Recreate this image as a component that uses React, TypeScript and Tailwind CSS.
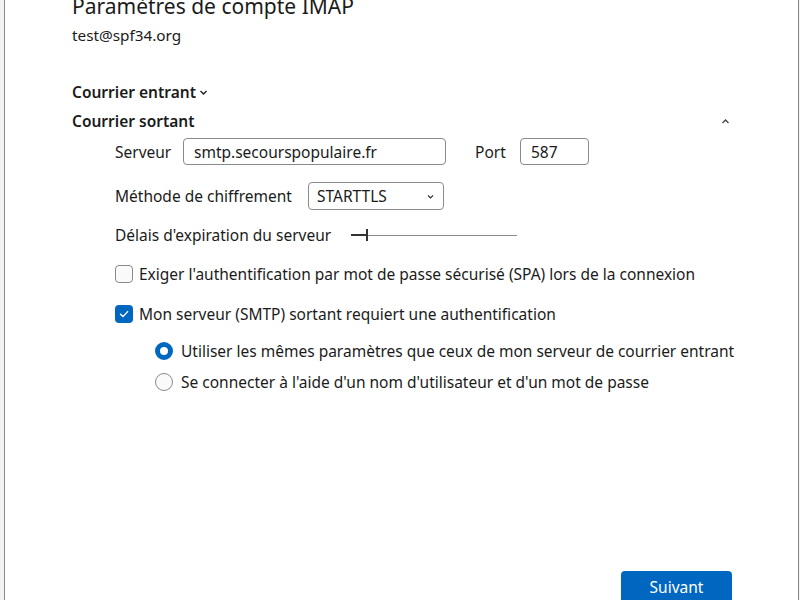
import React from "react";

const font = { fontFamily: '"Noto Sans", "Liberation Sans", sans-serif' };

function Checkbox({ checked }: { checked?: boolean }) {
  if (checked) {
    return (
      <span className="flex h-[18px] w-[18px] shrink-0 items-center justify-center rounded-[4px] bg-[#0067c0]">
        <svg width="12" height="12" viewBox="0 0 12 12" fill="none">
          <path d="M2.5 6.2 L5 8.6 L9.6 3.6" stroke="white" strokeWidth="1.4" strokeLinecap="round" strokeLinejoin="round" />
        </svg>
      </span>
    );
  }
  return <span className="h-[18px] w-[18px] shrink-0 rounded-[4px] border border-[#8a8a8a] bg-[#fafafa]" />;
}

function Radio({ checked }: { checked?: boolean }) {
  if (checked) {
    return <span className="h-[18px] w-[18px] shrink-0 rounded-full border-[5px] border-[#0067c0] bg-white" />;
  }
  return <span className="h-[18px] w-[18px] shrink-0 rounded-full border border-[#8a8a8a] bg-[#fafafa]" />;
}

export default function App() {
  return (
    <div className="flex h-[600px] w-[800px] overflow-hidden bg-[#f3f3f3] text-[#1b1b1b]" style={font}>
      <div className="w-[4px] shrink-0" />
      <div className="flex w-[795px] shrink-0 flex-col border-x border-[#8a8a8a] bg-white">
        <div className="flex flex-1 flex-col pl-[67px] pr-[66px]">
          <h1 className="-mt-[8px] whitespace-nowrap text-[21px] leading-[28px] text-[#1b1b1b]">Paramètres de compte IMAP</h1>
          <div className="mt-[5px] text-[15.3px] leading-[20px]">test@spf34.org</div>

          <div className="mt-[37px] flex items-center text-[15.5px] font-semibold leading-[20px]">
            Courrier entrant
            <svg className="ml-[3px]" width="9" height="9" viewBox="0 0 9 9" fill="none">
              <path d="M1.5 3 L4.5 6 L7.5 3" stroke="#1b1b1b" strokeWidth="1.3" />
            </svg>
          </div>
          <div className="mt-[9px] flex items-center justify-between text-[15.5px] font-semibold leading-[20px]">
            <span>Courrier sortant</span>
            <svg className="mr-[2px]" width="9" height="9" viewBox="0 0 9 9" fill="none">
              <path d="M1.5 6 L4.5 3 L7.5 6" stroke="#444" strokeWidth="1.3" />
            </svg>
          </div>

          <div className="ml-[43px] flex flex-col whitespace-nowrap text-[15.5px] leading-[20px]">
            <div className="mt-[7px] flex items-center">
              <span className="w-[68px]">Serveur</span>
              <div className="flex h-[27px] w-[263px] items-center rounded-[4px] border border-[#8a8a8a] px-[10px]">
                smtp.secourspopulaire.fr
              </div>
              <span className="ml-[29px] w-[45px]">Port</span>
              <div className="flex h-[27px] w-[69px] items-center rounded-[4px] border border-[#8a8a8a] px-[10px]">
                587
              </div>
            </div>

            <div className="mt-[17px] flex items-center">
              <span className="w-[193px]">Méthode de chiffrement</span>
              <div className="flex h-[28px] w-[136px] items-center justify-between rounded-[4px] border border-[#8a8a8a] pl-[8px] pr-[8px]">
                <span>STARTTLS</span>
                <svg width="9" height="9" viewBox="0 0 9 9" fill="none">
                  <path d="M2 3.5 L4.5 6 L7 3.5" stroke="#333" strokeWidth="1.2" />
                </svg>
              </div>
            </div>

            <div className="mt-[15px] flex items-center">
              <span className="w-[236px]">Délais d'expiration du serveur</span>
              <div className="flex h-[12px] w-[166px] items-center">
                <span className="h-[2px] w-[15px] bg-[#333]" />
                <span className="h-[12px] w-[2px] bg-[#333]" />
                <span className="h-[1px] flex-1 bg-[#8a8a8a]" />
              </div>
            </div>

            <label className="mt-[19px] flex items-center gap-[6px]">
              <Checkbox />
              <span>Exiger l'authentification par mot de passe sécurisé (SPA) lors de la connexion</span>
            </label>
            <label className="mt-[20px] flex items-center gap-[6px]">
              <Checkbox checked />
              <span>Mon serveur (SMTP) sortant requiert une authentification</span>
            </label>

            <div className="ml-[40px] flex flex-col">
              <label className="mt-[17px] flex items-center gap-[8px]">
                <Radio checked />
                <span>Utiliser les mêmes paramètres que ceux de mon serveur de courrier entrant</span>
              </label>
              <label className="mt-[11px] flex items-center gap-[8px]">
                <Radio />
                <span>Se connecter à l'aide d'un nom d'utilisateur et d'un mot de passe</span>
              </label>
            </div>
          </div>

          <div className="mt-auto flex justify-end">
            <button className="-mb-[4px] h-[33px] w-[111px] rounded-[4px] bg-[#0067c0] text-[15.5px] text-white">Suivant</button>
          </div>
        </div>
      </div>
      <div className="w-[1px] shrink-0" />
    </div>
  );
}
